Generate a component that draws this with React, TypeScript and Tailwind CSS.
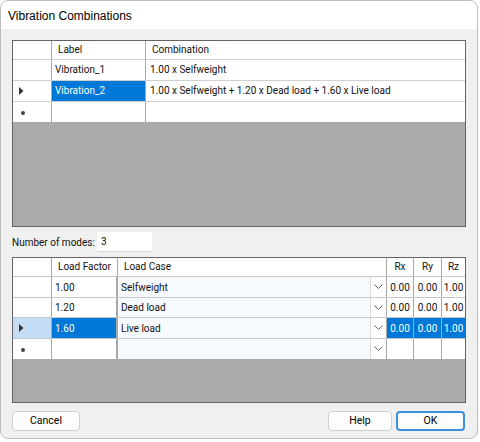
import React from 'react'

const font = { fontFamily: 'Roboto, "Liberation Sans", Arial, sans-serif' }

const Arrow = () => (
  <svg width="5" height="8" viewBox="0 0 5 8" className="ml-[6px]">
    <path d="M0 0 L4.5 4 L0 8 Z" fill="#333" />
  </svg>
)

const Star = () => (
  <span className="ml-[8px] mt-[2px] block h-[4px] w-[4px] rounded-full bg-[#444]" />
)

const Chevron = () => (
  <svg width="9" height="6" viewBox="0 0 9 6">
    <path d="M0.5 0.5 L4.5 4.5 L8.5 0.5" fill="none" stroke="#666" strokeWidth="1" />
  </svg>
)

const combos = [
  { label: 'Vibration_1', combo: '1.00 x Selfweight', sel: false },
  { label: 'Vibration_2', combo: '1.00 x Selfweight + 1.20 x Dead load + 1.60 x Live load', sel: true },
]

const factors = [
  { f: '1.00', lc: 'Selfweight', sel: false, h: 'h-[21px]' },
  { f: '1.20', lc: 'Dead load', sel: false, h: 'h-[20px]' },
  { f: '1.60', lc: 'Live load', sel: true, h: 'h-[21px]' },
]

function TopGrid() {
  return (
    <div className="h-[187px] border border-[#646464] bg-[#ababab] flex flex-col">
      <div className="grid grid-cols-[39px_94px_1fr] h-[19px] bg-white border-b border-[#d0d0d0]">
        <div className="border-r border-[#a8a8a8]" />
        <div className="border-r border-[#a8a8a8] pl-[6px] leading-[18px]">Label</div>
        <div className="pl-[6px] leading-[18px]">Combination</div>
      </div>
      {combos.map(c => (
        <div key={c.label} className="grid grid-cols-[39px_94px_1fr] h-[21px] bg-white border-b border-[#d0d0d0]">
          <div className="border-r border-[#a8a8a8] flex items-center">{c.sel && <Arrow />}</div>
          <div className={`border-r border-[#a8a8a8] pl-[3px] leading-[20px] ${c.sel ? 'bg-[#0078d7] text-white' : ''}`}>{c.label}</div>
          <div className="pl-[4px] leading-[20px] whitespace-nowrap">{c.combo}</div>
        </div>
      ))}
      <div className="grid grid-cols-[39px_94px_1fr] h-[20px] bg-white">
        <div className="border-r border-[#a8a8a8] flex items-center"><Star /></div>
        <div className="border-r border-[#a8a8a8]" />
        <div />
      </div>
    </div>
  )
}

function BottomGrid() {
  const cols = 'grid grid-cols-[39px_66px_269px_27px_28px_1fr]'
  return (
    <div className="h-[146px] border border-[#646464] bg-[#ababab] flex flex-col">
      <div className={`${cols} h-[19px] bg-white border-b border-[#c8c8c8]`}>
        <div className="border-r border-[#a8a8a8]" />
        <div className="border-r border-[#a8a8a8] pl-[6px] leading-[18px] whitespace-nowrap">Load Factor</div>
        <div className="border-r border-[#a8a8a8] pl-[6px] leading-[18px]">Load Case</div>
        <div className="border-r border-[#a8a8a8] text-center leading-[18px]">Rx</div>
        <div className="border-r border-[#a8a8a8] text-center leading-[18px]">Ry</div>
        <div className="text-center leading-[18px]">Rz</div>
      </div>
      {factors.map(r => {
        const sel = r.sel ? 'bg-[#0078d7] text-white' : 'bg-white'
        return (
          <div key={r.f} className={`${cols} ${r.h} border-b border-[#c8c8c8]`}>
            <div className={`border-r border-[#a8a8a8] flex items-center ${r.sel ? 'bg-[#c3ddf4]' : 'bg-white'}`}>{r.sel && <Arrow />}</div>
            <div className={`border-r-2 border-[#a8a8a8] pl-[3px] flex items-center ${sel}`}>{r.f}</div>
            <div className="border-r border-[#a8a8a8] flex bg-[#f6f9fd]">
              <div className="flex-1 pl-[3px] flex items-center">{r.lc}</div>
              <div className="w-[16px] bg-white border-l border-[#dcdcdc] flex items-center justify-center"><Chevron /></div>
            </div>
            <div className={`border-r border-[#a8a8a8] flex items-center justify-center ${sel}`}>0.00</div>
            <div className={`border-r border-[#a8a8a8] flex items-center justify-center ${sel}`}>0.00</div>
            <div className={`flex items-center justify-center ${sel}`}>1.00</div>
          </div>
        )
      })}
      <div className={`${cols} h-[20px] bg-white`}>
        <div className="border-r border-[#a8a8a8] flex items-center"><Star /></div>
        <div className="border-r-2 border-[#a8a8a8]" />
        <div className="border-r border-[#a8a8a8] flex bg-[#f6f9fd]">
          <div className="flex-1" />
          <div className="w-[16px] bg-white border-l border-[#dcdcdc] flex items-center justify-center"><Chevron /></div>
        </div>
        <div className="border-r border-[#a8a8a8]" />
        <div className="border-r border-[#a8a8a8]" />
        <div />
      </div>
    </div>
  )
}

function Btn({ children, w, primary }: { children: React.ReactNode; w: string; primary?: boolean }) {
  return (
    <button
      className={`${w} h-[20px] rounded-[4px] bg-[#fdfdfd] text-[10.5px] text-black flex items-center justify-center ${
        primary ? 'border-2 border-[#3b8fdc]' : 'border border-[#cfcfcf]'
      }`}>
      {children}
    </button>
  )
}

export default function App() {
  return (
    <div className="w-[480px] h-[442px] bg-white text-[10px] text-[#111]" style={font}>
      <div className="w-[478px] h-[439px] rounded-[8px] border border-[#bdbdbd] overflow-hidden flex flex-col bg-[#f0f0f0]">
        <div className="h-[28px] bg-white pl-[7px] pt-[1px] flex items-center text-[12px] text-black" style={{ fontFamily: '"Liberation Sans", Arial, sans-serif' }}>
          Vibration Combinations
        </div>
        <div className="px-[11px] pt-[11px] flex flex-col">
          <TopGrid />
          <div className="flex items-center h-[20px] mt-[5px]">
            <span className="w-[85px] whitespace-nowrap">Number of modes:</span>
            <div className="w-[55px] h-[20px] bg-white border-b border-[#d8d8d8] pl-[4px] leading-[20px]">3</div>
          </div>
          <div className="mt-[5px]">
            <BottomGrid />
          </div>
          <div className="mt-[8px] flex items-center">
            <Btn w="w-[68px]">Cancel</Btn>
            <div className="flex-1" />
            <Btn w="w-[64px]">Help</Btn>
            <div className="w-[4px]" />
            <Btn w="w-[69px]" primary>OK</Btn>
            <div className="w-[1px]" />
          </div>
        </div>
      </div>
    </div>
  )
}
